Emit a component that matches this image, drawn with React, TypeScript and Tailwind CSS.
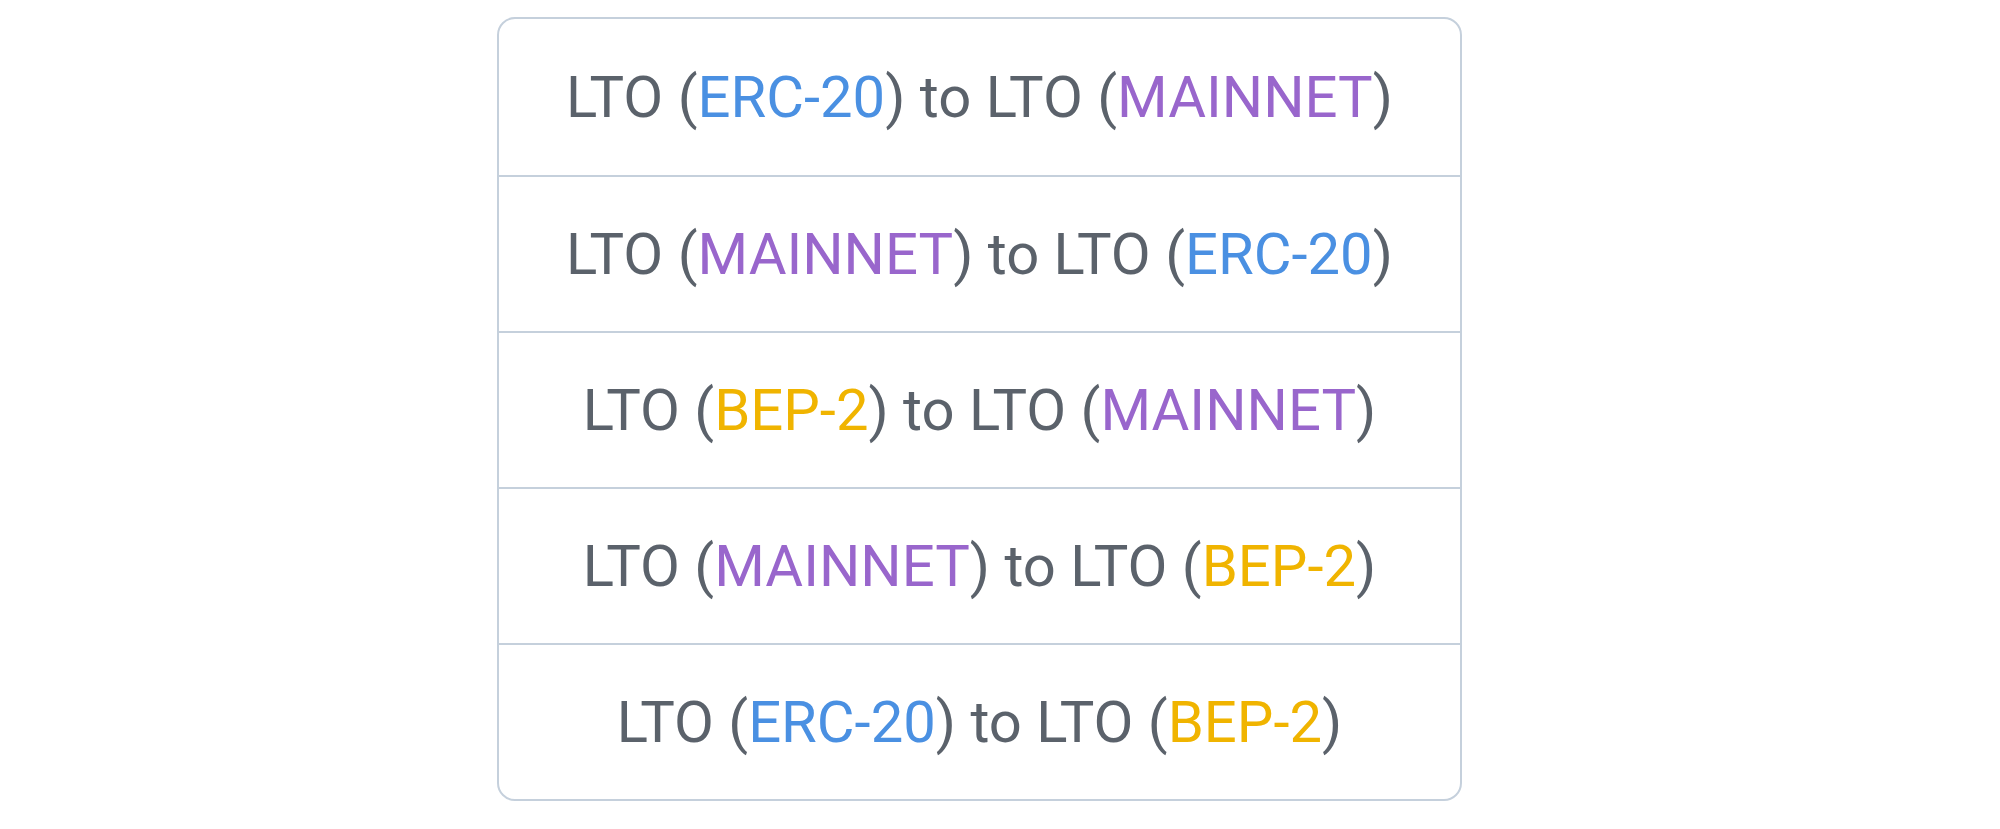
const tags = {
  erc: { label: 'ERC-20', className: 'text-[#4a90e2]' },
  main: { label: 'MAINNET', className: 'text-[#9966cc]' },
  bep: { label: 'BEP-2', className: 'text-[#f0b400]' },
};

type Tag = keyof typeof tags;

const swaps: [Tag, Tag][] = [
  ['erc', 'main'],
  ['main', 'erc'],
  ['bep', 'main'],
  ['main', 'bep'],
  ['erc', 'bep'],
];

function Token({ tag }: { tag: Tag }) {
  return (
    <>
      LTO (<span className={tags[tag].className}>{tags[tag].label}</span>)
    </>
  );
}

export default function App() {
  return (
    <div className="min-h-screen bg-white flex items-start justify-center pt-[17px] pr-[41px]">
      <div
        className="w-[965px] border-2 border-[#c5d0dc] rounded-[18px] overflow-hidden"
        style={{ fontFamily: 'Roboto, "Liberation Sans", sans-serif' }}
      >
        {swaps.map(([from, to], i) => (
          <button
            key={i}
            className="w-full h-[156px] flex items-center justify-center text-[58px] text-[#5b626b] border-t-2 border-[#c5d0dc] first:border-t-0"
          >
            <span>
              <Token tag={from} /> to <Token tag={to} />
            </span>
          </button>
        ))}
      </div>
    </div>
  );
}
